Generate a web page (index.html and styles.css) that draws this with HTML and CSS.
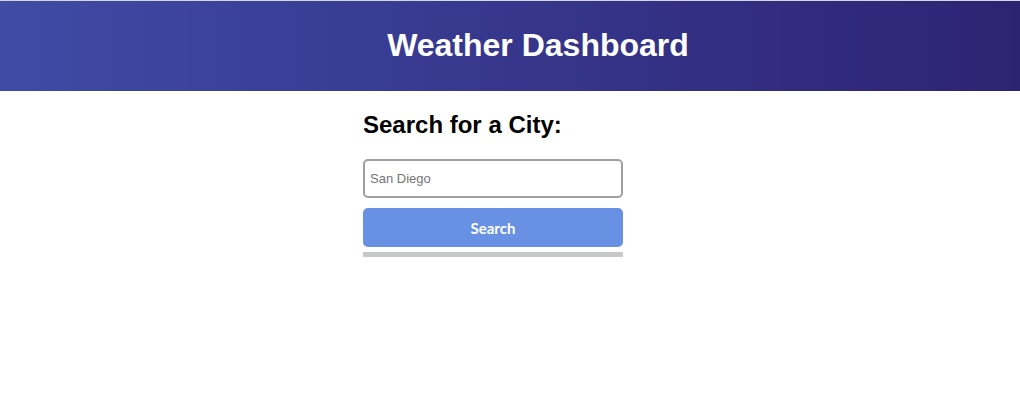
FILE: index.html
```
<!DOCTYPE html>
<html lang="en">
<head>
<meta charset="utf-8">
<title>Weather Dashboard</title>
<link rel="stylesheet" href="styles.css">
</head>
<body>
<header class="header"><h1 class="title">Weather Dashboard</h1></header>
<main class="main">
<form class="search">
<label class="search-label" for="city">Search for a City:</label>
<input class="search-input" id="city" type="text" placeholder="San Diego">
<button class="search-button" type="submit">Search</button>
<hr class="divider">
</form>
</main>
</body>
</html>
```
FILE: styles.css
```
* { box-sizing: border-box; }
body {
  margin: 0;
  background: #fff;
  color: #000;
  font-family: "Liberation Sans", Arial, sans-serif;
}
.header {
  padding: 26px 0 28px 56px;
  border-top: 1px solid #d3d6dc;
  background: linear-gradient(to right, #3f4ba5, #2d2373) border-box;
  color: #fff;
  text-align: center;
}
.title { margin: 0; font-size: 32px; line-height: 36px; }
.main { display: flex; justify-content: center; padding: 19px 34px 0 0; }
.search { display: flex; flex-direction: column; width: 260px; }
.search-label {
  margin-bottom: 19px;
  font-size: 24px;
  font-weight: bold;
  line-height: 30px;
}
.search-input {
  height: 39px;
  margin-bottom: 10px;
  padding: 0 5px;
  border: 2px solid #a0a0a0;
  border-radius: 5px;
  font-family: inherit;
  font-size: 13px;
}
.search-input::placeholder { color: #757575; }
.search-button {
  height: 39px;
  border: 0;
  border-radius: 5px;
  background: #6891e4;
  color: #fff;
  font-family: Lato, sans-serif;
  font-size: 15px;
  font-weight: bold;
}
.divider { width: 100%; height: 5px; margin: 5px 0 0; border: 0; background: #c8c8c8; }
```
